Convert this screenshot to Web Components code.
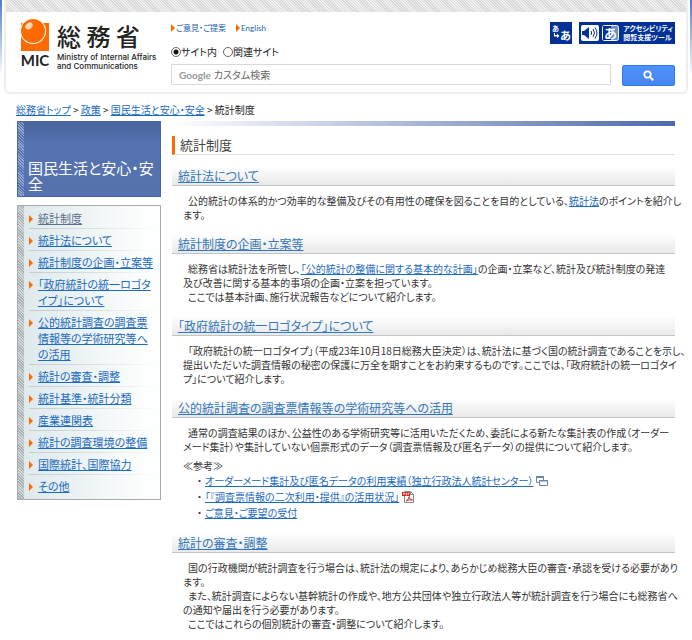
<!DOCTYPE html>
<html lang="ja">
<head>
<meta charset="utf-8">
<meta name="viewport" content="width=device-width, initial-scale=1">
<title>総務省｜統計制度</title>
<style>
    body{margin: 0; background: #fff; color: #333; font-family: "Noto Sans CJK JP", sans-serif; font-size: 10px; line-height: 14px; font-feature-settings: "palt"; --link: #1a6abf; --orange: #ff6a00;}
    a{color: var(--link);}
    .columns{display: grid; grid-template-columns: 144px minmax(0, 1fr); column-gap: 11px; padding: 0 17px 8px 17px;}
    .refs{list-style: none; margin: 0; padding: 0 0 0 14px;}
    .refs li{display: flex; align-items: center; gap: 3px; line-height: 16px;}
</style>
</head>
<body>
    <site-header></site-header>
    <bread-crumbs>
        <a href="#">総務省トップ</a> &gt; <a href="#">政策</a> &gt; <a href="#">国民生活と安心・安全</a> &gt; 統計制度
    </bread-crumbs>
    <div class="columns">
        <side-menu heading="国民生活と安心・安全">
            <menu-item current>統計制度</menu-item>
            <menu-item>統計法について</menu-item>
            <menu-item>統計制度の企画・立案等</menu-item>
            <menu-item>「政府統計の統一ロゴタイプ」について</menu-item>
            <menu-item>公的統計調査の調査票情報等の学術研究等への活用</menu-item>
            <menu-item>統計の審査・調整</menu-item>
            <menu-item>統計基準・統計分類</menu-item>
            <menu-item>産業連関表</menu-item>
            <menu-item>統計の調査環境の整備</menu-item>
            <menu-item>国際統計、国際協力</menu-item>
            <menu-item>その他</menu-item>
        </side-menu>
        <page-article heading="統計制度">
            <topic-section heading="統計法について">
                <p>&ensp;公的統計の体系的かつ効率的な整備及びその有用性の確保を図ることを目的としている、<a href="#">統計法</a>のポイントを紹介し<br>ます。</p>
            </topic-section>
            <topic-section heading="統計制度の企画・立案等">
                <p>&ensp;総務省は統計法を所管し、<a href="#">「公的統計の整備に関する基本的な計画」</a>の企画・立案など、統計及び統計制度の発達<br>及び改善に関する基本的事項の企画・立案を担っています。<br>&ensp;ここでは基本計画、施行状況報告などについて紹介します。</p>
            </topic-section>
            <topic-section heading="「政府統計の統一ロゴタイプ」について">
                <p>&ensp;「政府統計の統一ロゴタイプ」（平成23年10月18日総務大臣決定）は、統計法に基づく国の統計調査であることを示し、<br>提出いただいた調査情報の秘密の保護に万全を期すことをお約束するものです。ここでは、「政府統計の統一ロゴタイ<br>プ」について紹介します。</p>
            </topic-section>
            <topic-section heading="公的統計調査の調査票情報等の学術研究等への活用">
                <p>&ensp;通常の調査結果のほか、公益性のある学術研究等に活用いただくため、委託による新たな集計表の作成（オーダー<br>メード集計）や集計していない個票形式のデータ（調査票情報及び匿名データ）の提供について紹介します。</p>
                <p>≪参考≫</p>
                <ul class="refs">
                    <li>・<a href="#">オーダーメード集計及び匿名データの利用実績（独立行政法人統計センター）</a><svg width="12" height="12" viewBox="0 0 12 12" role="img" aria-label="別ウィンドウ"><path d="M.5 1.500h7v6h-7z" fill="#fff" stroke="#6a86ab"/><path d="M0 1h8v2H0z" fill="#6a86ab"/><path d="M3.500 5.500h8v5h-8z" fill="#fff" stroke="#6a86ab"/><path d="M3 5h9v1.500H3z" fill="#6a86ab"/></svg></li>
                    <li>・<a href="#">「『調査票情報の二次利用・提供』の活用状況」</a><svg width="12" height="12" viewBox="0 0 12 12" role="img" aria-label="PDF"><path d="M2.500.5h6l3 3v8h-9z" fill="#fff" stroke="#888"/><path d="M8.500.5v3h3" fill="none" stroke="#888"/><path d="M0 1h8v4H0z" fill="#d3241c"/><path d="M1.500 4V2h1v1h-1M4 2v2h1V2zM6.500 4V2H7.500" fill="none" stroke="#fff" stroke-width=".6"/><path d="M4 10c2-1 3-3 3-4.500 0 2 1.500 3.500 3.500 3.500-2-.3-4 0-6.500 1z" fill="none" stroke="#d3241c" stroke-width=".9"/></svg></li>
                    <li>・<a href="#">ご意見・ご要望の受付</a></li>
                </ul>
            </topic-section>
            <topic-section heading="統計の審査・調整">
                <p>&ensp;国の行政機関が統計調査を行う場合は、統計法の規定により、あらかじめ総務大臣の審査・承認を受ける必要があり<br>ます。<br>&ensp;また、統計調査によらない基幹統計の作成や、地方公共団体や独立行政法人等が統計調査を行う場合にも総務省へ<br>の通知や届出を行う必要があります。<br>&ensp;ここではこれらの個別統計の審査・調整について紹介します。</p>
            </topic-section>
        </page-article>
    </div>

<script>
// Shared base: puts the markup of the subclass in an open shadow root
class BaseElement extends HTMLElement {
    constructor() {
        super();
        const shadowRoot = this.attachShadow({ mode: 'open' });
        const template = document.createElement('template');
        template.innerHTML = this.render();
        shadowRoot.appendChild(template.content.cloneNode(true));
    }
}

class SiteLogo extends BaseElement {
    render() {
        return `
            <style>
                :host{display: block;}
                a{display: grid; grid-template-columns: 30px auto; column-gap: 7px; color: #222; text-decoration: none;}
                .mark{display: flex; flex-direction: column; align-items: center;}
                .mic{font-family: Lato, sans-serif; font-weight: 700; font-size: 15px; line-height: 16px;}
                .name{font-size: 24px; line-height: 35px; font-weight: 500; color: #222; white-space: nowrap;}
                .en{font-family: Inter, sans-serif; font-size: 8px; line-height: 9px; font-weight: 500; white-space: nowrap;}
            </style>
            <a href="#">
                <span class="mark">
                    <svg width="30" height="34" viewBox="0 0 30 34" aria-hidden="true">
                        <path d="M1 5h28v28H1z" fill="#ff6a00"/>
                        <circle cx="13" cy="13" r="13" fill="#fff"/>
                        <circle cx="13" cy="13" r="12" fill="#ff6a00"/>
                        <ellipse cx="9" cy="8" rx="4" ry="3" transform="rotate(-40 9 8)" fill="#ffd9b8"/>
                    </svg>
                    <span class="mic">MIC</span>
                </span>
                <span>
                    <div class="name">総 務 省</div>
                    <div class="en">Ministry of Internal Affairs<br>and Communications</div>
                </span>
            </a>
        `;
    }
}
customElements.define('site-logo', SiteLogo);

class AccessTools extends BaseElement {
    render() {
        return `
            <style>
                :host{display: flex; gap: 7px;}
                a{display: flex; align-items: center; gap: 3px; height: 22px; background: #003296; color: #fff; text-decoration: none; font-weight: 700;}
                .ruby{width: 22px;}
                .voice{padding: 0 2px;}
                .label{font-size: 7px; line-height: 9px; white-space: nowrap;}
            </style>
            <a class="ruby" href="#" aria-label="ふりがな">
                <svg width="22" height="22" viewBox="0 0 22 22" fill="#fff" font-family="Noto Sans CJK JP">
                    <text x="2" y="9" font-size="7">あ</text>
                    <text x="10" y="18" font-size="11">あ</text>
                    <path d="M5 11v2h2v-1.500l2.500 2.500L7 16v-1.500H4V11z"/>
                </svg>
            </a>
            <a class="voice" href="#">
                <svg width="39" height="18" viewBox="0 0 39 18" font-family="Noto Sans CJK JP">
                    <rect x="0" y="1" width="18" height="16" rx="2" fill="#fff"/>
                    <path d="M1 7h2l5-4v12l-5-4H1z" fill="#003296"/>
                    <path d="M10 7q1.500 2 0 4M12 5q3 4 0 8M14 3.500q4 5.500 0 11" fill="none" stroke="#003296"/>
                    <rect x="21.500" y="1.500" width="16" height="15" rx="2" fill="#6f8fc8" stroke="#fff"/>
                    <path d="M22 2h8v14h-8z" fill="#003296"/>
                    <text x="23" y="14" font-size="13" fill="#fff">あ</text>
                </svg>
                <span class="label">アクセシビリティ<br>閲覧支援ツール</span>
            </a>
        `;
    }
}
customElements.define('access-tools', AccessTools);

class SearchForm extends BaseElement {
    render() {
        return `
            <style>
                :host{display: block;}
                form{margin: 0;}
                .scope{display: flex; gap: 6px; margin-top: 1px; line-height: 14px; color: #222;}
                label{display: flex; align-items: center;}
                input[type=radio]{width: 10px; height: 10px; margin: 0; appearance: none; border: 1px solid #666; border-radius: 50%; box-sizing: border-box; background: #fff;}
                input[type=radio]:checked{background: radial-gradient(circle, #111 0 2px, #fff 3px);}
                .row{display: flex; gap: 11px; margin-top: 5px;}
                .box{flex: 1; min-width: 0; display: flex; align-items: center; gap: 3px; box-sizing: border-box; height: 21px; border: 1px solid #d9d9d9; padding: 0 7px;}
                .brand{font-family: Lato, sans-serif; font-size: 10px; line-height: 14px; color: #999; font-weight: 700;}
                input[type=text]{flex: 1; min-width: 0; border: 0; outline: 0; padding: 0; background: none; font: inherit; font-feature-settings: inherit; height: 18px;}
                input::placeholder{color: #666; opacity: 1;}
                button{display: flex; align-items: center; justify-content: center; width: 53px; height: 21px; margin: 1px 0 0; padding: 0; border: 1px solid #3079ed; border-radius: 2px; background: linear-gradient(#4d90fe, #4787ed);}
            </style>
            <form>
                <div class="scope">
                    <label><input type="radio" name="scope" checked>サイト内</label>
                    <label><input type="radio" name="scope">関連サイト</label>
                </div>
                <div class="row">
                    <div class="box">
                        <span class="brand">Google</span>
                        <input type="text" aria-label="検索" placeholder="カスタム検索">
                    </div>
                    <button type="button" aria-label="検索">
                        <svg width="11" height="11" viewBox="0 0 11 11"><circle cx="4.500" cy="4.500" r="3.200" fill="none" stroke="#fff" stroke-width="1.800"/><path d="M7 7l3.200 3.200" stroke="#fff" stroke-width="2"/></svg>
                    </button>
                </div>
            </form>
        `;
    }
}
customElements.define('search-form', SearchForm);

class SiteHeader extends BaseElement {
    render() {
        return `
            <style>
                :host{display: block; padding: 0 4px; background: linear-gradient(#4a7dd0, #fff) left top / 2px 76px no-repeat, linear-gradient(#4a7dd0, #fff) right top / 2px 76px no-repeat;}
                .frame{border: 2px solid #eee; border-top: 0; border-radius: 0 0 6px 6px; background: #fff;}
                .hatch{height: 12px; background: repeating-linear-gradient(45deg, #d8d8d8 0 1px, #f0f0f0 1px 2px);}
                .inner{display: grid; grid-template-columns: 137px minmax(0, 1fr); column-gap: 14px; padding: 6px 11px 6px 14px;}
                .top{display: flex; justify-content: space-between; align-items: flex-start; padding-top: 4px;}
                .links{display: flex; gap: 10px; font-size: 8px; line-height: 12px;}
                .links a{display: flex; align-items: center; gap: 1px; text-decoration: none; color: #1a5fae;}
                .links a::before{content: ""; border-left: 4px solid #ff6a00; border-top: 4px solid transparent; border-bottom: 4px solid transparent;}
                .links a:last-child{font-family: Lato, sans-serif;}
            </style>
            <header class="frame">
                <div class="hatch"></div>
                <div class="inner">
                    <site-logo></site-logo>
                    <div>
                        <div class="top">
                            <nav class="links"><a href="#">ご意見・ご提案</a><a href="#">English</a></nav>
                            <access-tools></access-tools>
                        </div>
                        <search-form></search-form>
                    </div>
                </div>
            </header>
        `;
    }
}
customElements.define('site-header', SiteHeader);

class BreadCrumbs extends BaseElement {
    render() {
        return `
            <style>
                :host{display: block; padding: 9px 16px 4px; line-height: 14px; color: #222;}
            </style>
            <nav><slot></slot></nav>
        `;
    }
}
customElements.define('bread-crumbs', BreadCrumbs);

class MenuItem extends BaseElement {
    render() {
        return `
            <style>
                :host{display: flex; padding: 3px 0 2px; font-size: 11px; line-height: 16px; border-bottom: 1px solid; border-image: linear-gradient(90deg, #c5cccf, transparent) 1;}
                :host(:last-child){border-bottom-color: transparent; border-image: none;}
                :host::before{content: ""; flex: none; height: 0; margin: 5px 5px 0 0; border-left: 4px solid #ff6a00; border-top: 4px solid transparent; border-bottom: 4px solid transparent;}
                a{color: var(--link);}
                :host([current]) a{color: #5c6f8a;}
            </style>
            <a href="#"><slot></slot></a>
        `;
    }
}
customElements.define('menu-item', MenuItem);

class SideMenu extends BaseElement {
    render() {
        return `
            <style>
                :host{display: block;}
                .title{margin: 0 0 8px; box-sizing: border-box; min-height: 76px; display: flex; align-items: flex-end; padding: 0 2px 4px 10px; color: #fff; font-size: 15px; line-height: 16px; font-weight: 400; border: 1px solid #4a66a0; background: repeating-linear-gradient(45deg, #8fa5d0 0 1px, #5875b3 1px 2px) left top / 6px 100% no-repeat, linear-gradient(#48649c, #5573b0 30%, #5572ae);}
                nav{padding: 1px 3px 2px 11px; border: 1px solid #aaa; background: repeating-linear-gradient(45deg, #a9b3b6 0 1px, #d0d8da 1px 2px) left top / 6px 100% no-repeat, linear-gradient(90deg, #dde8eb, #fdfefe 90%);}
            </style>
            <h2 class="title">${this.getAttribute('heading')}</h2>
            <nav><slot></slot></nav>
        `;
    }
}
customElements.define('side-menu', SideMenu);

class PageArticle extends BaseElement {
    render() {
        return `
            <style>
                :host{display: block;}
                .bar{height: 5px; background: linear-gradient(90deg, #fff, #4c69aa);}
                h1{margin: 10px 0 11px; padding-left: 5px; border-left: 3px solid var(--orange); border-bottom: 1px solid #ddd; font-size: 13px; line-height: 18px; font-weight: 400; color: #444;}
            </style>
            <div class="bar"></div>
            <h1>${this.getAttribute('heading')}</h1>
            <slot></slot>
        `;
    }
}
customElements.define('page-article', PageArticle);

class TopicSection extends BaseElement {
    render() {
        return `
            <style>
                :host{display: block; margin-bottom: 12px;}
                h2{margin: 0 0 8px; padding: 0 6px; border-bottom: 1px solid #c4c4c4; background: linear-gradient(#fff, #e9e9e9); font-size: 12px; line-height: 19px; font-weight: 400;}
                a{color: #3377bb;}
                .body{padding-left: 11px; margin-right: -16px;}
                ::slotted(p){margin: 0 0 5px;}
                ::slotted(p:last-child), ::slotted(p:nth-child(2)){margin: 0;}
            </style>
            <h2><a href="#">${this.getAttribute('heading')}</a></h2>
            <div class="body"><slot></slot></div>
        `;
    }
}
customElements.define('topic-section', TopicSection);
</script>
</body>
</html>
